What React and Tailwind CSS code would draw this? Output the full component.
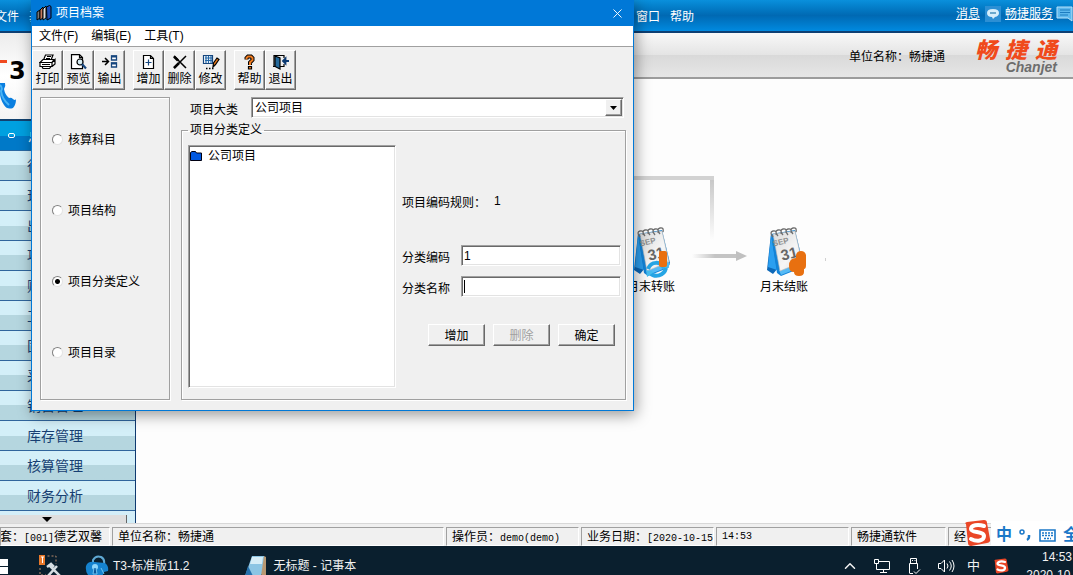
import React, { useState } from "react";
import { X, ChevronUp } from "lucide-react";

const sideItems = [
  "往来管理",
  "现金银行",
  "出纳管理",
  "项目管理",
  "财务报表",
  "工资管理",
  "固定资产",
  "采购管理",
  "销售管理",
  "库存管理",
  "核算管理",
  "财务分析",
];

const sections = ["核算科目", "项目结构", "项目分类定义", "项目目录"];

const raised =
  "border border-t-white border-l-white border-r-[#696969] border-b-[#696969] shadow-[inset_-1px_-1px_0_#a0a0a0]";
const sunken =
  "border border-t-[#a0a0a0] border-l-[#a0a0a0] border-r-white border-b-white shadow-[inset_1px_1px_0_#696969,inset_-1px_-1px_0_#e3e3e3]";
const etched = "border border-[#a0a0a0] shadow-[1px_1px_0_#fff,inset_1px_1px_0_#fff]";
const panel =
  "h-[19px] shrink-0 overflow-hidden whitespace-nowrap border border-b-white border-l-[#a0a0a0] border-r-white border-t-[#a0a0a0] pl-[5px] leading-[18px]";

function ToolIcon({ name }) {
  return (
    <svg width="18" height="16" viewBox="0 0 18 16" fill="none" stroke="#000" strokeWidth="1.2">
      {name === "print" && (
        <>
          <path d="M4.5 6 6.500 1H14l-2 5M8 2.500h4M7 4.500h4" fill="#fff" />
          <path d="M1 8.500 4 5.500h11l-2 3z" fill="#fff" />
          <path d="M1 8.500h12v4H1zM13 8.500l3-3V10l-3 2.500" fill="#fff" />
          <path d="M3 12.500h9l-1.500 2H4zM3 10.500h8" fill="#fff" />
        </>
      )}
      {name === "preview" && (
        <>
          <path d="M1.5.6h8l3 3v11h-11zM9.5.6v3h3" fill="#fff" />
          <circle cx="10" cy="8" r="3" fill="#d7edf5" />
          <path d="m12 10 4 4.5" stroke="#16467e" strokeWidth="2.2" />
        </>
      )}
      {name === "export" && (
        <>
          <path d="M1 7.5h6M4 4l3.5 3.5L4 11" strokeWidth="1.5" />
          <path d="M10.5 2h5v4h-5zM10.5 9h5v4h-5z" fill="#fff" stroke="#16467e" strokeWidth="1.3" />
          <path d="M10 2.5h6M10 9.5h6" stroke="#16467e" strokeWidth="2" />
        </>
      )}
      {name === "add" && (
        <>
          <path d="M3.5 1.5h7l3 3v10h-10zM10.5 1.5v3h3" fill="#fff" />
          <path d="M8.5 5.5v6M5.5 8.5h6" stroke="#16467e" />
        </>
      )}
      {name === "delete" && (
        <>
          <path d="m3 2 12 12M15 2 3 14" strokeWidth="1.5" />
          <path d="m3 2.5 4 4M3 14l5-5" strokeWidth="2.5" />
        </>
      )}
      {name === "edit" && (
        <>
          <path d="M1.5 1.5h9v8h-9z" fill="#fff" stroke="#16467e" />
          <path d="M3 4h7M3 6.5h7M4 2v7M6.5 2v7M9 2v7" stroke="#2468a8" />
          <path d="M4 14.5h1.5M7 14.5h1.5M10 14.5h1.5" strokeWidth="1.5" />
          <path d="m11 13 .5-4L15 4l2 1.5-3.5 5z" fill="#e87818" />
        </>
      )}
      {name === "help" && (
        <>
          <path d="M5.5 5.5V4L7 2.5h3L11.5 4v2L9 8.5V11" strokeWidth="4" />
          <path d="M5.5 5.5V4L7 2.5h3L11.5 4v2L9 8.5V11" stroke="#ee7a20" strokeWidth="2" />
          <path d="M7.5 12.5h3V15h-3z" fill="#ee7a20" />
        </>
      )}
      {name === "exit" && (
        <>
          <path d="M2 12V1.5h10V4M12 10v2.5H8M1 12.5h3" />
          <path d="M3 2l5 2v11l-5-2.5z" fill="#256a9c" />
          <path d="M17 7h-5M13.5 4.5 11 7l2.5 2.5z" fill="#0b3972" stroke="#0b3972" strokeWidth="1.8" />
        </>
      )}
    </svg>
  );
}

function ToolButton({ icon, label }) {
  return (
    <button className={`flex h-10 w-[31px] flex-col items-center gap-px bg-[#f0f0f0] pt-[3px] leading-4 ${raised}`}>
      <ToolIcon name={icon} />
      <span className="whitespace-nowrap">{label}</span>
    </button>
  );
}

function Calendar({ badge }) {
  return (
    <svg width="44" height="52" viewBox="-2 0 44 52">
      <defs>
        <linearGradient id="paper" x1="0" y1="0" x2="1" y2="1">
          <stop offset="0" stopColor="#d9d9d9" />
          <stop offset="0.6" stopColor="#f6f6f6" />
          <stop offset="1" stopColor="#dcdcdc" />
        </linearGradient>
      </defs>
      <path d="M7 7 3 43l6 4 5-6z" fill="#0c68b8" />
      <path d="M7 7 4 40l9 3z" fill="#2b9ff0" />
      <path d="M7 7 31 3l8 33-2 5-20 8-4-3z" fill="#1283d8" />
      <path d="M15 43 37 35l2 2-2 3-20 8z" fill="#55baf5" />
      <path d="M9 7 31 4l7 31-22 9z" fill="url(#paper)" stroke="#b9b9b9" strokeWidth="0.6" />
      <g fill="none" stroke="#6e6e6e" strokeWidth="1.3">
        <path d="M9 10Q5 5 9 4t3 4M14 9q-4-5 0-6t3 4M19 8q-4-5 0-6t3 4M24 8q-4-5 0-6t3 4M29 7q-4-5 0-6t3 4" />
      </g>
      <g transform="rotate(-14 20 20)" fill="#666" fontFamily="Liberation Sans" fontWeight="bold">
        <text x="10" y="17" fontSize="8" fill="#8e8e8e">SEP</text>
        <text x="15" y="33" fontSize="15">31</text>
      </g>
      {badge === "transfer" ? (
        <>
          <path
            d="M17 42c3-8 13-8 16-1M35 41c-2 8-11 10-16 5"
            fill="none"
            stroke="#26a5e4"
            strokeWidth="4"
          />
          <path d="m30 40 8 1-2-8zM23 45l-8-2 1 7z" fill="#45bdf0" />
          <rect x="28" y="24" width="8" height="16" rx="2" fill="#e87010" />
        </>
      ) : (
        <path d="M32 30v-2q1-4 5-4t5 4v10q0 4-2 4v3q0 4-5 4t-5-4q-5 0-5-6 0-8 7-8z" fill="#e87010" />
      )}
    </svg>
  );
}

function SogouMark({ size }) {
  return (
    <svg width={size} height={size} viewBox="0 0 28 28" className="shrink-0">
      <path d="M3 5Q1 4 4 3L21 1q3 0 3 3l3 16q1 3-3 4L8 27q-3 0-3-3z" fill="#ea4626" />
      <path
        d="M21 7C15 5 8 6 8 10s13 2 13 7-7 6-13 3"
        fill="none"
        stroke="#fff"
        strokeWidth="4"
        strokeLinecap="round"
      />
    </svg>
  );
}

function ProjectDialog() {
  const [section, setSection] = useState("项目分类定义");
  const [code, setCode] = useState("1");
  const [name, setName] = useState("");

  const button = `h-[22px] w-[57px] bg-[#f0f0f0] pt-px ${raised}`;

  return (
    <section
      aria-label="项目档案"
      className="absolute left-[31px] top-0 z-10 w-[603px] border border-t-0 border-[#0078d7] bg-[#f0f0f0] shadow-[2px_4px_14px_rgba(0,0,0,0.4)]"
    >
      <header className="flex h-[26px] items-center bg-[#0078d7] pl-1 pr-2 text-white">
        <svg width="16" height="16" viewBox="0 0 16 16" stroke="#000" strokeWidth="1">
          <path d="m1 7 3-2v8l-3 2z" fill="#777" />
          <path d="m4 5 3-3v11l-3 2z" fill="#c57a60" />
          <path d="m7 4 3-3v12l-3 2z" fill="#ddd" />
          <path d="m10.5 2 3-1.5 1.5 1V13l-4 2z" fill="#174fc0" />
        </svg>
        <h1 className="ml-1 grow">项目档案</h1>
        <button aria-label="关闭">
          <X size={15} strokeWidth={1.5} />
        </button>
      </header>
      <nav className="flex h-[21px] items-center gap-[13px] border-b border-[#a0a0a0] bg-white pl-[7px]">
        <button>文件(F)</button>
        <button>编辑(E)</button>
        <button>工具(T)</button>
      </nav>

      <div className="flex gap-2 pt-[3px]">
        <div className="flex">
          <ToolButton icon="print" label="打印" />
          <ToolButton icon="preview" label="预览" />
          <ToolButton icon="export" label="输出" />
        </div>
        <div className="flex">
          <ToolButton icon="add" label="增加" />
          <ToolButton icon="delete" label="删除" />
          <ToolButton icon="edit" label="修改" />
        </div>
        <div className="flex">
          <ToolButton icon="help" label="帮助" />
          <ToolButton icon="exit" label="退出" />
        </div>
      </div>

      <div className="flex gap-[11px] pb-[10px] pl-2 pr-[7px] pt-[7px]">
        <div className={`flex w-[130px] shrink-0 flex-col gap-[51px] pl-[11px] pt-[31px] ${etched}`}>
          {sections.map((s) => (
            <label key={s} className="flex h-5 items-center gap-[5px]">
              <input
                type="radio"
                name="section"
                checked={section === s}
                onChange={() => setSection(s)}
                className="size-[11px] appearance-none rounded-full border border-b-[#e3e3e3] border-l-[#808080] border-r-[#e3e3e3] border-t-[#808080] bg-white checked:bg-[radial-gradient(circle,#000_2px,#fff_3px)]"
              />
              <span className="pt-px">{s}</span>
            </label>
          ))}
        </div>

        <div className="flex min-w-0 grow flex-col">
          <div className="flex items-center pl-[9px] pr-[2px]">
            <label htmlFor="category" className="w-[61px] pt-1">
              项目大类
            </label>
            <div className={`relative grow bg-white ${sunken}`}>
              <select id="category" className="block h-[19px] w-full appearance-none pl-[3px] pt-px outline-none">
                <option>公司项目</option>
              </select>
              <span
                className={`pointer-events-none absolute bottom-px right-px top-px flex w-[17px] items-center justify-center bg-[#f0f0f0] ${raised}`}
              >
                <svg width="7" height="4" viewBox="0 0 7 4">
                  <path d="M0 0h7L3.5 4z" />
                </svg>
              </span>
            </div>
          </div>

          <fieldset className={`mt-[3px] min-w-0 pb-[11px] pl-1.5 pr-1 pt-1.5 ${etched}`}>
            <legend className="px-[2px] leading-[18px]">项目分类定义</legend>
            <div className="flex gap-[6px]">
              <ul className={`h-[243px] w-[208px] shrink-0 bg-white pt-[2px] ${sunken}`}>
                <li className="flex items-center gap-[6px] pl-px">
                  <svg width="12" height="10" viewBox="0 0 12 10">
                    <path d="M.5 9.5v-8l1.5-1h3.5L6.5 2h5v7.5z" fill="#0058e0" stroke="#001" />
                  </svg>
                  公司项目
                </li>
              </ul>
              <div className="flex grow flex-col pt-[48px]">
                <dl className="flex">
                  <dt className="pt-[2px]">项目编码规则：</dt>
                  <dd className="pl-2">1</dd>
                </dl>
                <div className="mt-[34px] flex items-center">
                  <label htmlFor="code" className="w-[59px] pt-1">
                    分类编码
                  </label>
                  <input
                    id="code"
                    value={code}
                    onChange={(e) => setCode(e.target.value)}
                    className={`h-[21px] w-[160px] bg-white px-[2px] outline-none ${sunken}`}
                  />
                </div>
                <div className="mt-[10px] flex items-center">
                  <label htmlFor="name" className="w-[59px] pt-1">
                    分类名称
                  </label>
                  <div className="relative">
                    <input
                      id="name"
                      value={name}
                      onChange={(e) => setName(e.target.value)}
                      className={`block h-[21px] w-[160px] bg-white px-[2px] outline-none ${sunken}`}
                    />
                    <span className="absolute left-[3px] top-1 h-[13px] w-px bg-black" />
                  </div>
                </div>
                <div className="mt-[27px] flex gap-2 pl-[26px]">
                  <button className={button}>增加</button>
                  <button disabled className={`${button} text-[#a0a0a0]`}>
                    删除
                  </button>
                  <button className={button}>确定</button>
                </div>
              </div>
            </div>
          </fieldset>
        </div>
      </div>
    </section>
  );
}

function MenuBar() {
  return (
    <div className="flex h-[33px] shrink-0 items-center border-b-2 border-[#0d3f73] bg-linear-to-b from-[#0a90dc] via-[#0069b3] to-[#008ae0] text-white shadow-[0_1px_0_#8a8a8a]">
      <nav className="flex grow gap-[10px] overflow-hidden whitespace-nowrap pt-[2px]">
        <div className="-ml-[5px] flex w-[631px] gap-[10px]">
          <button>文件</button>
          <button>基础设置</button>
        </div>
        <button>窗口</button>
        <button>帮助</button>
      </nav>
      <div className="flex shrink-0 items-center pb-1">
        <a href="#messages" className="underline">
          消息
        </a>
        <svg width="16" height="16" viewBox="0 0 16 16" className="ml-[5px]">
          <path d="M0 0h16v16H0z" fill="#2c8fd4" />
          <path d="M2 7q0-4 6-4t6 4q0 3-4 4l-2 2-1-2Q2 11 2 7" fill="#d6eefb" />
          <path d="M5 7h6" stroke="#6ba8cc" strokeWidth="2" />
        </svg>
        <a href="#service" className="ml-1 underline">
          畅捷服务
        </a>
        <svg width="17" height="16" viewBox="0 0 17 16" className="ml-[3px]">
          <path d="M1 1h15v14l-4-3H1z" fill="#5db8ee" stroke="#b8e2fa" />
          <path d="M4 4h10M4 6.5h10M4 9h8" stroke="#1d7cc0" />
        </svg>
      </div>
    </div>
  );
}

function Sidebar() {
  return (
    <aside className="flex w-[136px] shrink-0 flex-col border-r border-[#0f3a70] bg-[#d3eef8]">
      <div className="h-[88px] shrink-0 border-b-2 border-[#12426f] bg-linear-to-b from-[#ececec] via-white to-[#f4f4f4]">
        <div className="flex h-[50px] items-end">
          <span className="mb-[20px] h-[3px] w-[7px] bg-[#f04a20]" />
          <span className="pl-[2px] font-['DejaVu_Sans'] text-2xl font-bold leading-6 text-black">3</span>
        </div>
        <svg width="20" height="28" viewBox="0 0 20 28">
          <path d="M0 0h5q1 3-1 6 1 6 5 9 2-1 4 1t3 0q0 6-3 9-6 2-9-3-4-6-4-12z" fill="#0a7fe0" />
          <path d="M0 2q3 3 1 6 1 8 8 14" fill="none" stroke="#49b4f5" strokeWidth="2" />
        </svg>
      </div>
      <button className="flex h-[30px] shrink-0 items-center gap-[13px] border-b border-[#2a6aa4] bg-linear-to-b from-[#00a0e0] from-50% to-[#0079c8] to-50% pl-2 text-sm text-white">
        <span className="h-[5px] w-[7px] rounded-xs border border-white" />
        总账
      </button>
      <ul className="shrink-0">
        {sideItems.map((item) => (
          <li key={item}>
            <a
              href="#module"
              className="flex h-[30px] items-center border-b border-[#2f659c] bg-linear-to-b from-[#d3eff8] from-50% to-[#b5d6df] to-50% pl-[27px] text-sm text-[#173f72]"
            >
              {item}
            </a>
          </li>
        ))}
      </ul>
      <button
        aria-label="向下滚动"
        className="mr-2 mt-1 flex h-2 shrink-0 items-center border-r border-[#666] bg-[#dedede] pl-[42px]"
      >
        <svg width="10" height="5" viewBox="0 0 10 5">
          <path d="M0 0h10L5 5z" />
        </svg>
      </button>
    </aside>
  );
}

function Workspace() {
  return (
    <main className="flex min-w-0 grow flex-col">
      <div className="flex h-[46px] shrink-0 items-center justify-end border-b-2 border-[#9c9c9c] bg-[linear-gradient(#f8f8f8,#e4e4e4_50%,#d9d9d9_50%,#e6e6e6)] pr-4">
        <p className="pt-[3px]">单位名称：畅捷通</p>
        <div className="ml-[30px] flex flex-col items-end gap-px pt-1">
          <div className="flex gap-2 text-[22px] font-black italic leading-[18px] text-[#f04a1c]">
            <span>畅</span>
            <span>捷</span>
            <span>通</span>
          </div>
          <span className="text-sm font-bold italic leading-3 text-[#6d6d6d]">Chanjet</span>
        </div>
      </div>
      <div className="relative grow overflow-hidden bg-[#fdfdfd]">
        <svg width="720" height="220" viewBox="0 0 720 220" className="absolute left-0 top-0">
          <defs>
            <linearGradient id="fade" x1="0" y1="0" x2="0" y2="1">
              <stop offset="0" stopColor="#c8c8c8" />
              <stop offset="1" stopColor="#fdfdfd" />
            </linearGradient>
            <linearGradient id="fadeRight" x1="0" y1="0" x2="1" y2="0">
              <stop offset="0" stopColor="#fdfdfd" />
              <stop offset="0.5" stopColor="#c4c4c4" />
            </linearGradient>
          </defs>
          <rect x="480" y="97" width="98" height="4" fill="#d2d2d2" />
          <rect x="574" y="101" width="4" height="60" fill="url(#fade)" />
          <rect x="556" y="175" width="46" height="4" fill="url(#fadeRight)" />
          <path d="m600 172 11 5-11 5z" fill="#c0c0c0" />
          <rect x="689" y="179" width="1" height="3" fill="#d0d0d0" />
        </svg>
        <button className="absolute left-[491px] top-[148px] flex flex-col items-center leading-4">
          <Calendar badge="transfer" />
          月末转账
        </button>
        <button className="absolute left-[624px] top-[148px] flex flex-col items-center leading-4">
          <Calendar badge="close" />
          月末结账
        </button>
      </div>
    </main>
  );
}

function ImeBar() {
  return (
    <div className="absolute bottom-[-1px] right-0 flex h-7 w-[110px] items-center overflow-hidden text-[#1b78c8]">
      <SogouMark size={28} />
      <div className="flex h-6 items-center gap-[7px] bg-white pl-[5px] pt-1 text-base font-bold leading-5">
        <span>中</span>
        <svg width="13" height="14" viewBox="0 0 13 14" className="shrink-0" fill="none" stroke="currentColor">
          <circle cx="3" cy="4" r="2" strokeWidth="1.5" />
          <path d="M10 7v2q0 2-2 3" strokeWidth="2.5" />
        </svg>
        <svg width="17" height="13" viewBox="0 0 17 13" className="shrink-0" fill="none" stroke="currentColor">
          <path d="M1 1h15v11H1z" strokeWidth="1.6" />
          <path d="M3 4h11M3 6.5h11M5 9.5h7" strokeWidth="1.4" strokeDasharray="2 1" />
        </svg>
        <span>全</span>
      </div>
    </div>
  );
}

function StatusBar() {
  return (
    <footer className="relative flex h-[23px] shrink-0 items-end gap-[2px] border-t border-[#d8d8d8] bg-[#f0f0f0]">
      <div className={`w-[110px] ${panel}`}>
        <p className="-ml-[18px]">
          账套：<span className="font-['Liberation_Mono'] text-[10px]">[001]</span>德艺双馨
        </p>
      </div>
      <div className={`grow ${panel}`}>单位名称：畅捷通</div>
      <div className={`w-[133px] ${panel}`}>
        操作员：<span className="font-['Liberation_Mono'] text-[10px]">demo(demo)</span>
      </div>
      <div className={`w-[133px] ${panel}`}>
        业务日期：<span className="font-['Liberation_Mono'] text-[10px]">[2020-10-15</span>
      </div>
      <div className={`w-[133px] font-['Liberation_Mono'] text-[10px] ${panel}`}>14:53</div>
      <div className={`w-[95px] ${panel}`}>畅捷通软件</div>
      <div className={`w-[125px] ${panel}`}>经</div>
      <ImeBar />
    </footer>
  );
}

function Taskbar() {
  return (
    <div className="h-[29px] shrink-0 overflow-hidden bg-[#0a1f2e] text-[#f2f2f2]">
      <div className="flex h-10 items-center">
        <button aria-label="开始" className="grid w-2 grid-cols-1 gap-px">
          <span className="h-[7px] bg-white" />
          <span className="h-[7px] bg-white" />
        </button>
        <button aria-label="截图工具" className="ml-[30px]">
          <svg width="24" height="24" viewBox="0 0 24 24" fill="none">
            <path d="M9.5 2H18v8M2 14v7h6" stroke="#b98b6c" strokeDasharray="2 2" />
            <path d="M1 1h6v10H1z" fill="#e8782a" />
            <path d="M3 3h3M4.5 3v6" stroke="#fff" />
            <path d="m9 13 4-3 3 3M12 12l10 10M19 12l-9 10" stroke="#d5dde2" strokeWidth="2.5" />
          </svg>
        </button>
        <button className="ml-[23px] flex items-center gap-1">
          <svg width="24" height="24" viewBox="0 0 24 24">
            <path d="M8 10V6q3-5 8-3 4 2 3 7" fill="none" stroke="#5fa9d4" strokeWidth="2" />
            <path d="M1 12q2-5 8-4l11 1q4 3 3 8l-4 1-2 5H5q-5-4-4-11" fill="#1583cf" />
            <circle cx="10" cy="13" r="3" fill="#8ed6fb" />
            <path d="m9 14-1 6h4l-1-6M16 14l3 6" fill="#07579d" stroke="#6fc4f0" />
          </svg>
          T3-标准版11.2
        </button>
        <button className="ml-14 flex items-center gap-[6px]">
          <svg width="22" height="24" viewBox="0 0 22 24">
            <path d="M8 2h11l2 1v18l-4 1z" fill="#b99872" />
            <path d="M7 2h12l-3 20H0z" fill="#8cc5e4" />
            <path d="M7 3h11l-1 7H5z" fill="#d6edf7" />
            <path d="m3 12 5 10H0z" fill="#2671ad" />
          </svg>
          无标题 - 记事本
        </button>
        <div className="ml-auto flex shrink-0 items-center whitespace-nowrap">
          <button aria-label="显示隐藏的图标">
            <ChevronUp size={18} strokeWidth={2} />
          </button>
          <svg width="18" height="16" viewBox="0 0 18 16" className="ml-[14px] shrink-0" fill="none" stroke="#fff">
            <path d="M6 3.5h10.5v8h-13V8M10.5 12v3M7 14.5h7M1.5 1.5h4v4h-4zM3.5 6v2.5" />
          </svg>
          <svg width="14" height="18" viewBox="0 0 14 18" className="ml-4 shrink-0" fill="none" stroke="#fff">
            <path d="M3.5 6V1.5h6V6M5 3.5h1M7.5 3.5h1M2.5 16V6.5h8V12M2.5 16.5H6M7 14.5l2 2 4-4" />
          </svg>
          <svg width="18" height="16" viewBox="0 0 18 16" className="ml-4 shrink-0" fill="none" stroke="#fff">
            <path d="M1.5 5.5H4l3.5-3.5v12L4 10.5H1.5zM10 5.5q2 2.500 0 5M12.500 3.500q3.500 4.500 0 9M15 2q4 6 0 12" />
          </svg>
          <span className="ml-3 text-[13px]">中</span>
          <span className="ml-[13px]">
            <SogouMark size={16} />
          </span>
          <p className="-mr-4 ml-4 w-[64px] shrink-0 text-center leading-[18px]">
            14:53
            <br />
            2020-10-15
          </p>
        </div>
      </div>
    </div>
  );
}

export default function App() {
  return (
    <div className="relative flex h-screen flex-col overflow-hidden bg-white font-['Liberation_Sans','Noto_Sans_CJK_SC',sans-serif] text-xs text-black">
      <MenuBar />
      <div className="flex min-h-0 grow overflow-hidden">
        <Sidebar />
        <Workspace />
      </div>
      <StatusBar />
      <Taskbar />
      <ProjectDialog />
    </div>
  );
}
